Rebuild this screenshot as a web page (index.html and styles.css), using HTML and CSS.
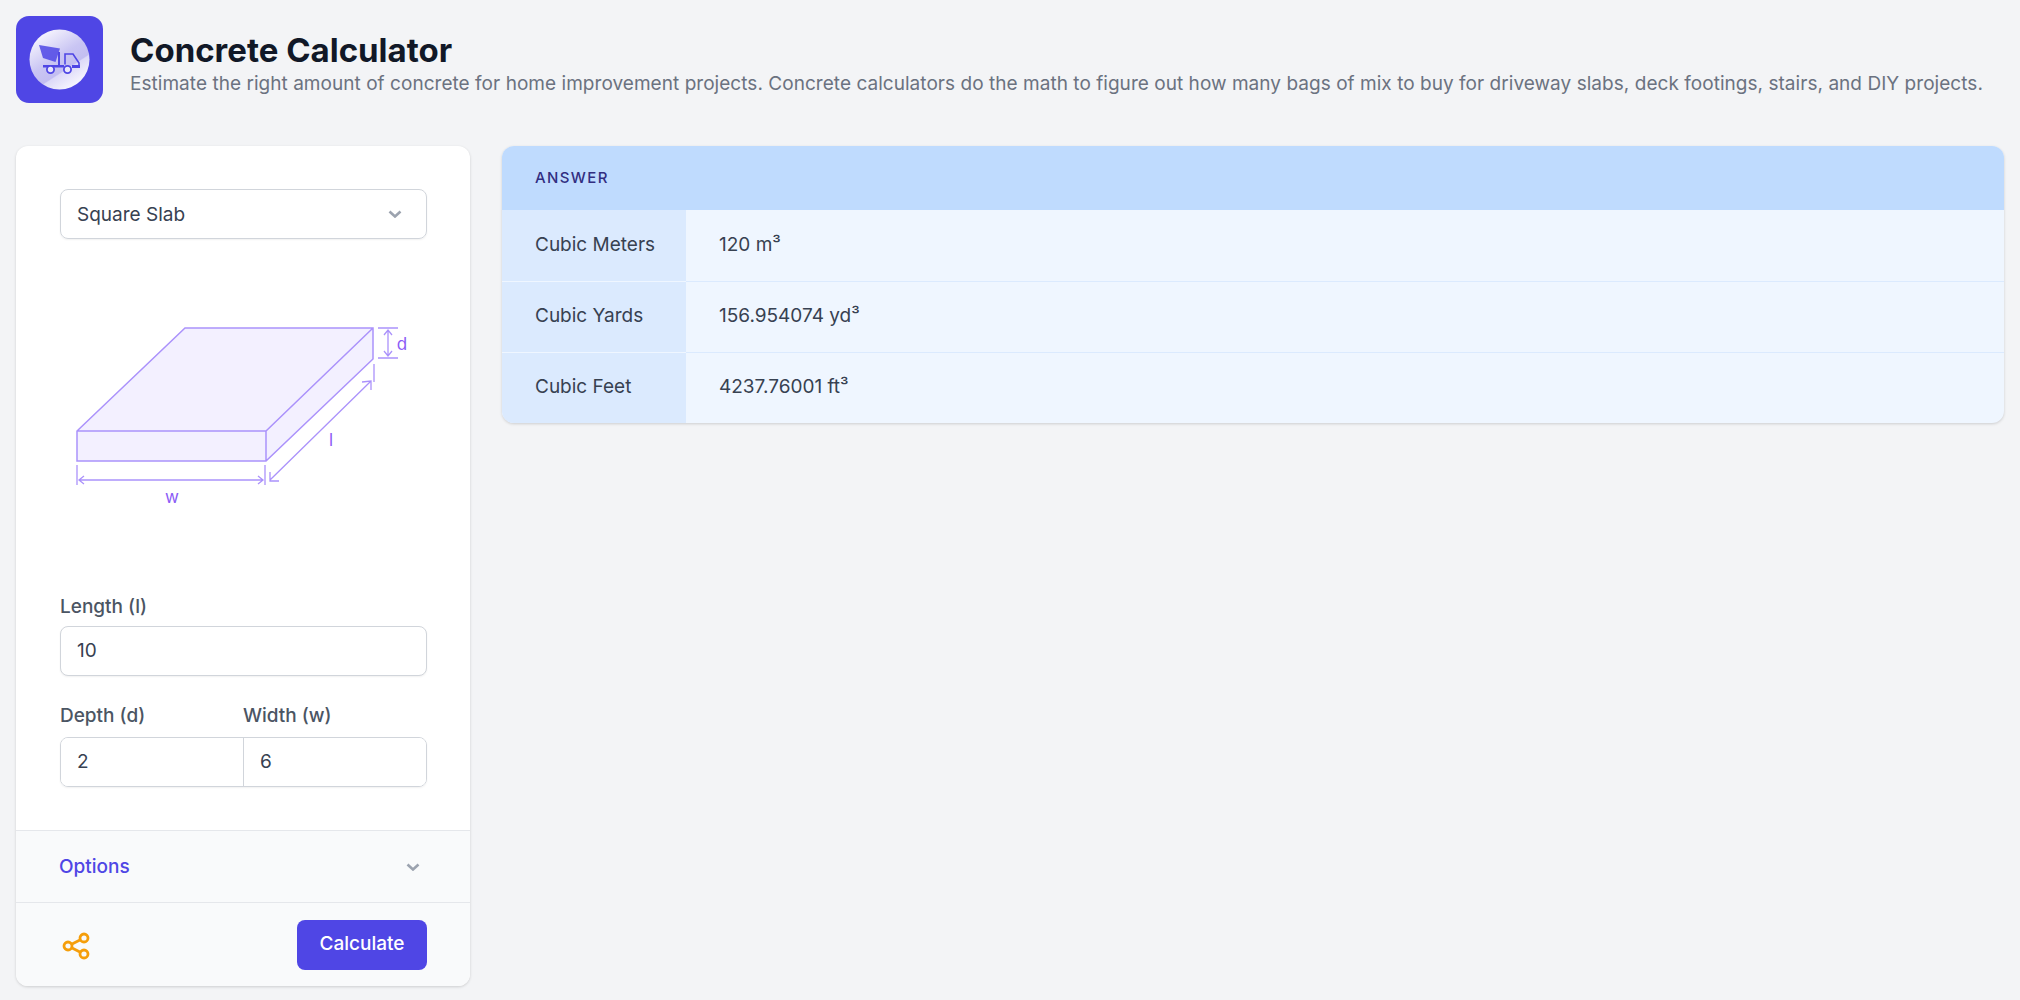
FILE: index.html
```html
<!DOCTYPE html>
<html lang="en">
<head>
<meta charset="utf-8">
<title>Concrete Calculator</title>
<link rel="stylesheet" href="styles.css">
</head>
<body>
<div class="page">
  <header class="header">
    <svg class="logo" viewBox="16 16 87 87" aria-hidden="true">
      <defs>
        <linearGradient id="disc" x1="0.2" y1="0.1" x2="0.75" y2="0.95">
          <stop offset="0" stop-color="#f4f2fd"/>
          <stop offset="0.45" stop-color="#c9c5f3"/>
          <stop offset="0.68" stop-color="#c3bef1"/>
          <stop offset="0.7" stop-color="#dcd9f8"/>
          <stop offset="1" stop-color="#f8f7fe"/>
        </linearGradient>
      </defs>
      <rect x="16" y="16" width="87" height="87" rx="13" fill="#4f46e5"/>
      <circle cx="59.5" cy="59.5" r="30" fill="url(#disc)"/>
      <path d="M39 45 L60 48.5 L55.5 62 L43 58 Z" fill="#4f46e5" fill-opacity=".85"/>
      <path d="M59 52 v13" stroke="#4f46e5" stroke-width="2" fill="none"/>
      <path d="M65 64.5 V54 H73 L79 63 V65" stroke="#4f46e5" stroke-width="1.6" fill="none"/>
      <path d="M43 65 H64 V67.5 H43 Z M72 65 H80 V68 H72 Z" fill="#4f46e5"/>
      <circle cx="50.5" cy="69.5" r="3.6" fill="#e8e6fb" stroke="#4f46e5" stroke-width="1.8"/>
      <circle cx="67.5" cy="69.5" r="3.6" fill="#e8e6fb" stroke="#4f46e5" stroke-width="1.8"/>
    </svg>
    <div class="heading">
      <h1 class="title">Concrete Calculator</h1>
      <p class="subtitle">Estimate the right amount of concrete for home improvement projects. Concrete calculators do the math to figure out how many bags of mix to buy for driveway slabs, deck footings, stairs, and DIY projects.</p>
    </div>
  </header>

  <main class="layout">
    <section class="panel">
      <div class="form">
        <div class="select">
          <span>Square Slab</span>
          <svg class="chevron" viewBox="0 0 14 8" aria-hidden="true"><path d="M1.5 1.5 L7 6.5 L12.5 1.5"/></svg>
        </div>
        <svg class="diagram" viewBox="60 240 367 330" aria-hidden="true">
          <path class="fill" d="M185 328 H373 V359 L266 461 H77 V431 Z"/>
          <path class="line" d="M77 431 L185 328 H373 V359 L266 461 H77 Z M77 431 H266 L373 328 M266 431 V461"/>
          <path class="thin" d="M378 328 H398 M378 358 H398 M388 331 V355 M384 335 L388 330 L392 335 M384 351 L388 356 L392 351"/>
          <path class="thin" d="M374 364 V382 M370 382 L270 480 M270 472 L270 481 L279 481 M362 382 L371 381 L371 390"/>
          <path class="thin" d="M77 465 V485 M265 465 V485 M79 480 H263 M84 476 L79 480 L84 484 M258 476 L263 480 L258 484"/>
          <text class="mark" x="402" y="350" text-anchor="middle">d</text>
          <text class="mark" x="331" y="446" text-anchor="middle">l</text>
          <text class="mark" x="172" y="503" text-anchor="middle">w</text>
        </svg>
        <label class="label">Length (l)</label>
        <input class="input" type="text" value="10">
        <div class="pair-labels">
          <label class="label">Depth (d)</label>
          <label class="label">Width (w)</label>
        </div>
        <div class="pair">
          <input class="pair-input" type="text" value="2">
          <input class="pair-input" type="text" value="6">
        </div>
      </div>
      <div class="options">
        <span>Options</span>
        <svg class="chevron" viewBox="0 0 14 8" aria-hidden="true"><path d="M1.5 1.5 L7 6.5 L12.5 1.5"/></svg>
      </div>
      <div class="actions">
        <svg class="share" viewBox="0 0 28 28" aria-hidden="true">
          <circle cx="6" cy="14" r="4"/>
          <circle cx="22" cy="6" r="4"/>
          <circle cx="22" cy="22" r="4"/>
          <path d="M9.6 12.2 L18.4 7.8 M9.6 15.8 L18.4 20.2"/>
        </svg>
        <button class="button" type="button">Calculate</button>
      </div>
    </section>

    <section class="answer">
      <div class="answer-head">Answer</div>
      <div class="row">
        <div class="key">Cubic Meters</div>
        <div class="value">120 m³</div>
      </div>
      <div class="row">
        <div class="key">Cubic Yards</div>
        <div class="value">156.954074 yd³</div>
      </div>
      <div class="row">
        <div class="key">Cubic Feet</div>
        <div class="value">4237.76001 ft³</div>
      </div>
    </section>
  </main>
</div>
</body>
</html>
```
FILE: styles.css
```css
* { box-sizing: border-box; }
html, body { margin: 0; padding: 0; }
body {
  background: #f3f4f6;
  font-family: Inter, "Liberation Sans", sans-serif;
  color: #374151;
  font-size: 19px;
}
.page { padding: 16px; }
.header { display: flex; align-items: flex-start; gap: 27px; height: 87px; }
.logo { width: 87px; height: 87px; flex: none; display: block; }
.heading { padding-top: 16px; }
.title { margin: 0; font-size: 33px; line-height: 36px; font-weight: 700; color: #111827; }
.subtitle { margin: 2px 0 0; font-size: 19px; line-height: 27px; color: #6b7280; white-space: nowrap; letter-spacing: .04px; }
.layout { display: grid; grid-template-columns: 454px 1fr; gap: 32px; margin-top: 43px; align-items: start; }
.panel { background: #fff; border-radius: 12px; box-shadow: 0 1px 3px rgba(0,0,0,.16); overflow: hidden; height: 840px; display: flex; flex-direction: column; }
.form { padding: 43px 43px 0 44px; flex: 1; }
.select { height: 50px; border: 1px solid #d1d5db; border-radius: 8px; box-shadow: 0 1px 2px rgba(0,0,0,.06); display: flex; align-items: center; justify-content: space-between; padding: 0 24px 0 16px; color: #374151; }
.chevron { width: 14px; height: 8px; display: block; }
.chevron path { fill: none; stroke: #9ca3af; stroke-width: 2.6; }
.diagram { display: block; width: 367px; height: 330px; margin: 1px 0 23px; }
.fill { fill: #f3f0ff; }
.line { fill: none; stroke: #ab92fb; stroke-width: 1.5; }
.thin { fill: none; stroke: #ab92fb; stroke-width: 1.3; }
.mark { font-size: 17px; fill: #8b5cf6; font-family: Inter, sans-serif; }
.label { display: block; font-size: 19px; line-height: 27px; font-weight: 500; color: #4b5563; }
.input, .pair-input { font: inherit; color: #374151; background: #fff; outline: none; }
.input { display: block; width: 100%; height: 50px; margin-top: 6px; padding: 0 16px 2px; border: 1px solid #d1d5db; border-radius: 8px; box-shadow: 0 1px 2px rgba(0,0,0,.06); }
.pair-labels { display: grid; grid-template-columns: 183px 1fr; margin-top: 26px; }
.pair { display: grid; grid-template-columns: 182px 1fr; height: 50px; margin-top: 8px; border: 1px solid #d1d5db; border-radius: 8px; box-shadow: 0 1px 2px rgba(0,0,0,.06); overflow: hidden; }
.pair-input { width: 100%; min-width: 0; height: 100%; border: 0; padding: 0 16px 2px; }
.pair-input + .pair-input { border-left: 1px solid #d1d5db; }
.options { height: 72px; flex: none; background: #f9fafb; border-top: 1px solid #e5e7eb; display: flex; align-items: center; justify-content: space-between; padding: 0 50px 0 43px; color: #4f46e5; font-weight: 500; }
.actions { height: 84px; flex: none; background: #f9fafb; border-top: 1px solid #e5e7eb; display: flex; align-items: flex-start; justify-content: space-between; padding: 17px 43px 0 46px; }
.share { width: 28px; height: 28px; margin-top: 12px; display: block; }
.share circle, .share path { fill: none; stroke: #f59e0b; stroke-width: 2.8; }
.button { width: 130px; height: 50px; border: 0; border-radius: 8px; background: #4f46e5; color: #fff; font: 500 19px Inter, sans-serif; padding: 0 0 4px; }
.answer { background: #eff6ff; border-radius: 12px; box-shadow: 0 1px 3px rgba(0,0,0,.16); overflow: hidden; }
.answer-head { height: 64px; background: #bfdbfe; display: flex; align-items: center; padding: 0 0 2px 33px; font-size: 15px; font-weight: 500; letter-spacing: 1.4px; text-transform: uppercase; color: #312e81; }
.row { display: flex; height: 71px; }
.row + .row { border-top: 1px solid #dbeafe; }
.key { width: 184px; flex: none; background: #dbeafe; display: flex; align-items: center; padding: 0 0 3px 33px; color: #374151; }
.row + .row .key { box-shadow: 0 -1px 0 #eff6ff; }
.value { flex: 1; display: flex; align-items: center; padding: 0 0 3px 33px; color: #374151; }
```
